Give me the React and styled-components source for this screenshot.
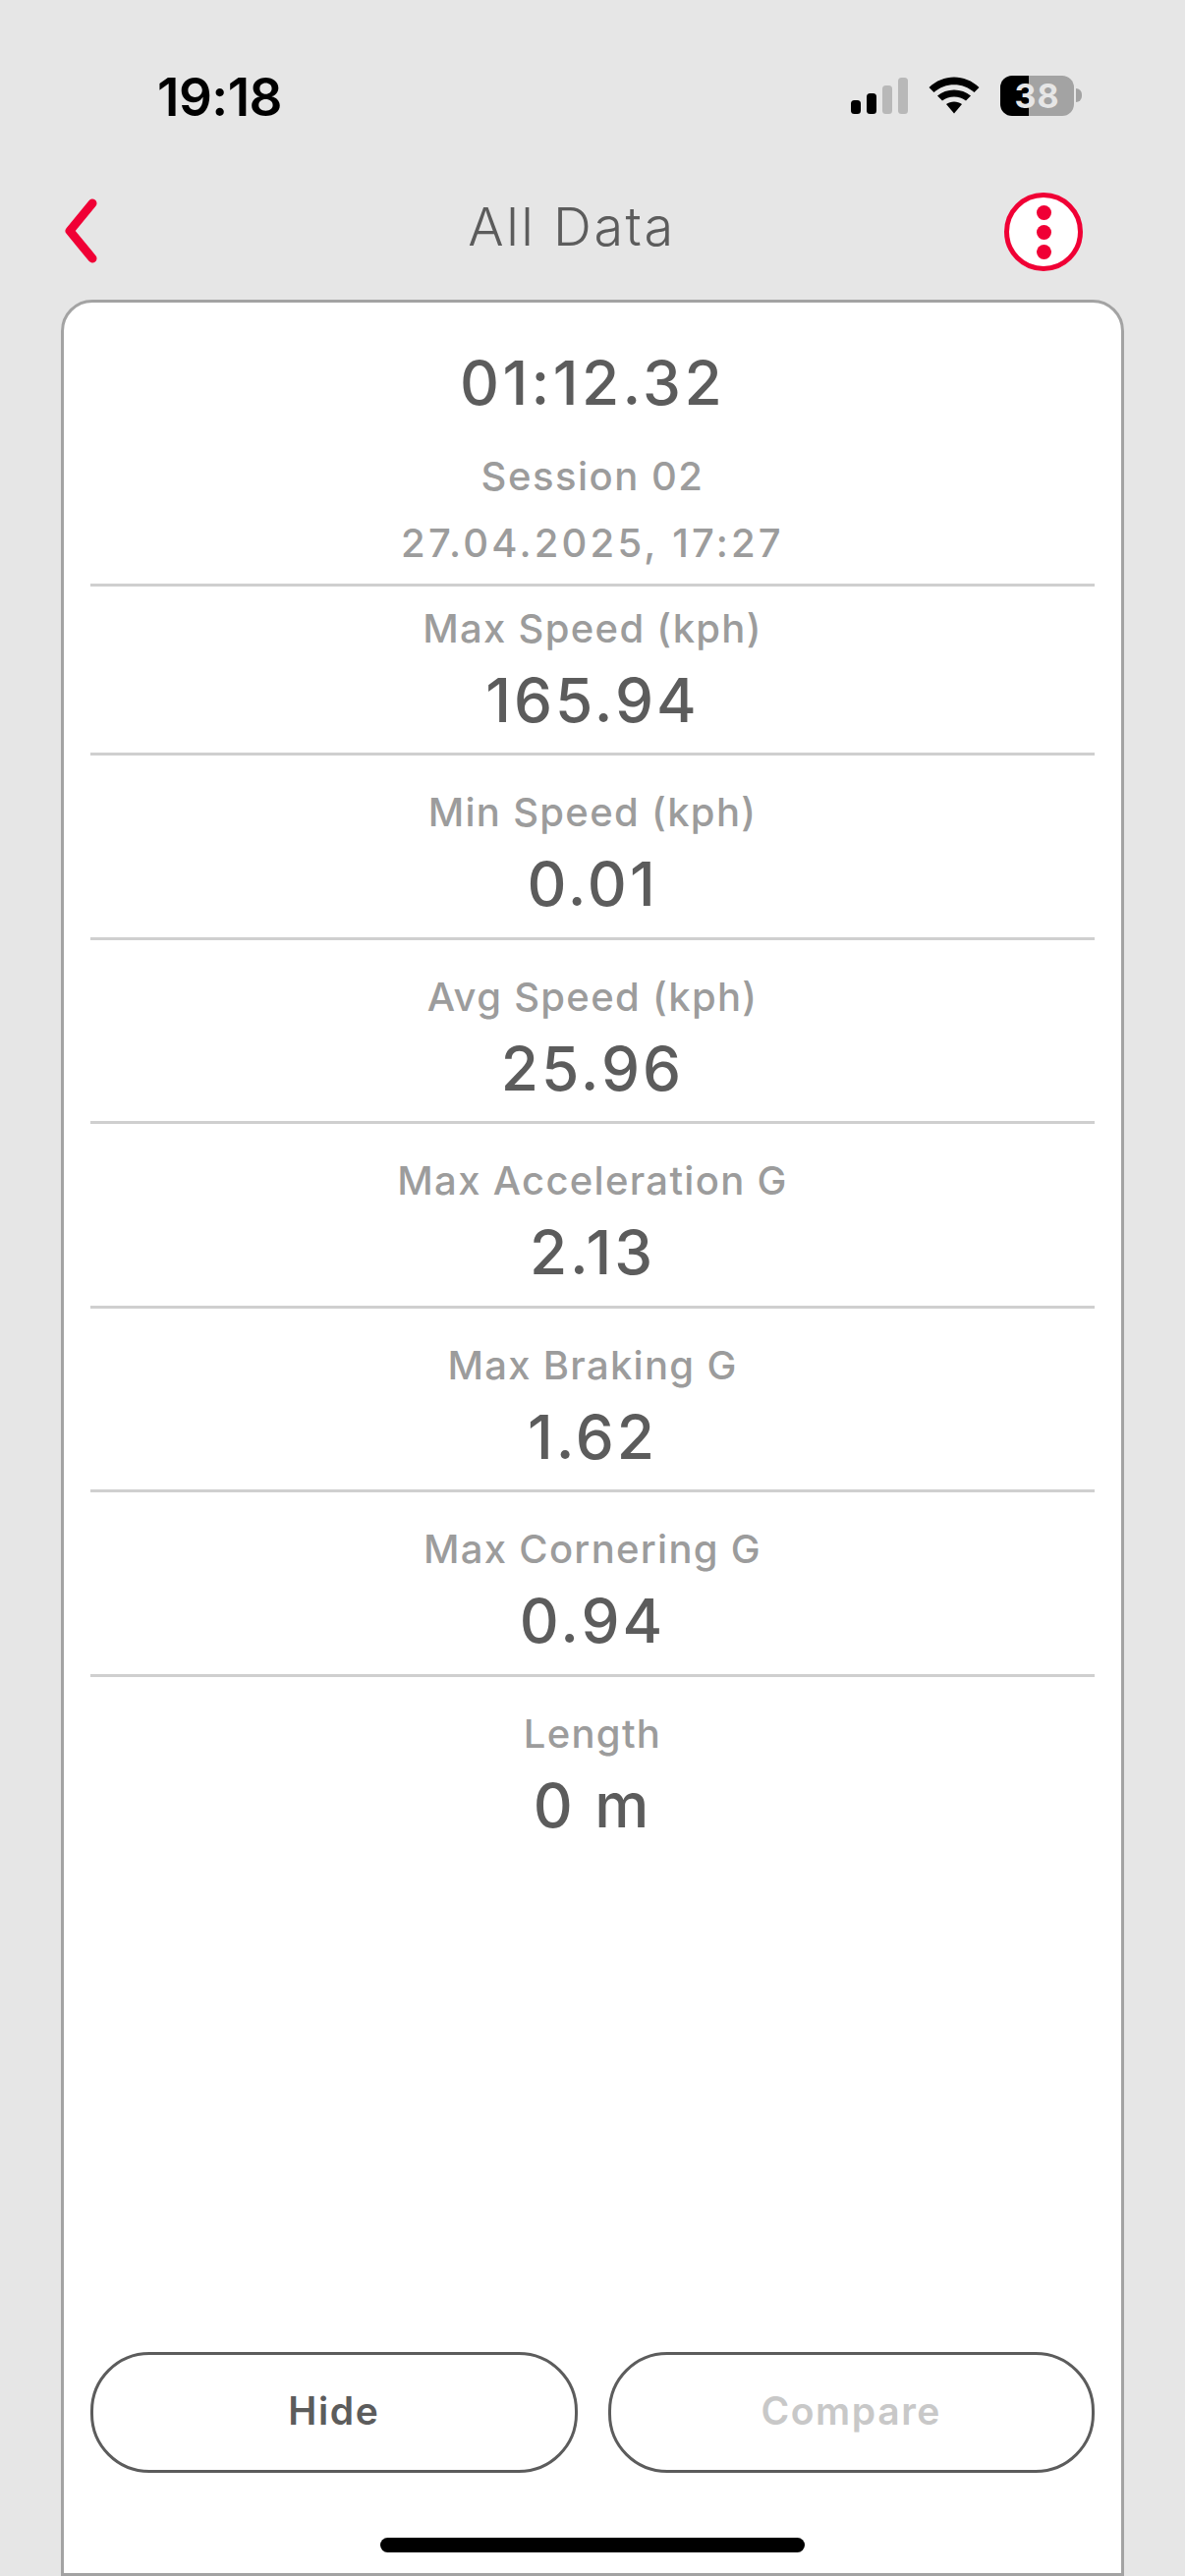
import React from "react";
import styled, { createGlobalStyle } from "styled-components";

const Global = createGlobalStyle`
  html, body { margin: 0; padding: 0; background: #e6e6e6; }
  * { box-sizing: border-box; }
`;

const Page = styled.div`
  position: relative;
  width: 1206px;
  height: 2622px;
  overflow: hidden;
  background: #e6e6e6;
  display: flex;
  flex-direction: column;
  font-family: Inter, "Noto Sans", sans-serif;
`;

const StatusBar = styled.div`
  height: 170px;
  padding: 74px 113px 0 160px;
  display: flex;
  justify-content: space-between;
  align-items: flex-start;
`;

const Clock = styled.div`
  font-weight: 600;
  font-size: 53px;
  line-height: 50px;
  letter-spacing: -0.5px;
  color: #000;
`;

const StatusIcons = styled.div`
  display: flex;
  align-items: center;
  gap: 21px;
  height: 46px;
`;

const Battery = styled.div`
  position: relative;
  width: 75px;
  height: 41px;
  border-radius: 12px;
  background: linear-gradient(90deg, #000 0 39%, #a3a3a3 39% 100%);
  color: #e6e6e6;
  font-weight: 700;
  font-size: 34px;
  line-height: 41px;
  text-align: center;
  letter-spacing: 1px;
  &::after {
    content: "";
    position: absolute;
    right: -8px;
    top: 13px;
    width: 6px;
    height: 14px;
    border-radius: 0 7px 7px 0;
    background: #a3a3a3;
  }
`;

const NavBar = styled.div`
  height: 135px;
  padding: 26px 104px 0 62px;
  display: grid;
  grid-template-columns: 120px 1fr 120px;
  align-items: start;
`;

const BackButton = styled.div`
  padding-top: 6px;
  line-height: 0;
`;

const Title = styled.div`
  text-align: center;
  font-weight: 300;
  font-size: 54px;
  line-height: 70px;
  letter-spacing: 2.5px;
  color: #5c5c5c;
`;

const MenuButton = styled.div`
  justify-self: end;
  width: 80px;
  height: 80px;
  border-radius: 50%;
  border: 5px solid #f00035;
  background: #fff;
  display: flex;
  flex-direction: column;
  align-items: center;
  justify-content: center;
  gap: 5px;
`;

const Dot = styled.span`
  width: 15px;
  height: 15px;
  border-radius: 50%;
  background: #f00035;
`;

const Card = styled.div`
  flex: 1;
  margin: 0 62px;
  border: 3px solid #a3a3a3;
  border-radius: 32px 32px 0 0;
  background: #fff;
  padding: 0 27px;
  display: flex;
  flex-direction: column;
`;

const Summary = styled.div`
  height: 289px;
  padding-top: 44px;
  border-bottom: 3px solid #cfcfcf;
  text-align: center;
  flex: none;
`;

const LapTime = styled.div`
  font-weight: 500;
  font-size: 62px;
  line-height: 76px;
  letter-spacing: 3.4px;
  margin-bottom: 23px;
  color: #5c5c5c;
`;

const Meta = styled.div`
  font-weight: 500;
  font-size: 40px;
  line-height: 68px;
  letter-spacing: ${(p) => p.$spacing}px;
  color: #9c9c9c;
`;

const Row = styled.div`
  flex: none;
  height: ${(p) => p.$h}px;
  padding-top: ${(p) => p.$top}px;
  border-bottom: ${(p) => (p.$last ? "none" : "3px solid #cfcfcf")};
  text-align: center;
`;

const Label = styled.div`
  font-weight: 500;
  font-size: 40px;
  line-height: 50px;
  letter-spacing: 1.3px;
  color: #9c9c9c;
`;

const Value = styled.div`
  font-weight: 500;
  font-size: 62px;
  line-height: 76px;
  letter-spacing: 3px;
  margin-top: 10px;
  color: #5c5c5c;
`;

const Actions = styled.div`
  margin-top: auto;
  margin-bottom: 102px;
  display: grid;
  grid-template-columns: 1fr 1fr;
  gap: 31px;
`;

const Pill = styled.div`
  height: 123px;
  padding-bottom: 4px;
  border: 3px solid #5c5c5c;
  border-radius: 60px;
  display: flex;
  align-items: center;
  justify-content: center;
  font-weight: 600;
  font-size: 39px;
  letter-spacing: 1.6px;
  color: ${(p) => (p.$disabled ? "#c8c8c8" : "#5c5c5c")};
`;

const HomeIndicator = styled.div`
  position: absolute;
  left: 387px;
  top: 2583px;
  width: 432px;
  height: 15px;
  border-radius: 8px;
  background: #000;
`;

const rows = [
  { label: "Max Speed (kph)", value: "165.94", h: 172, top: 18 },
  { label: "Min Speed (kph)", value: "0.01", h: 187.6, top: 33 },
  { label: "Avg Speed (kph)", value: "25.96", h: 187.6, top: 33 },
  { label: "Max Acceleration G", value: "2.13", h: 187.6, top: 33 },
  { label: "Max Braking G", value: "1.62", h: 187.6, top: 33 },
  { label: "Max Cornering G", value: "0.94", h: 187.6, top: 33 },
  { label: "Length", value: "0 m", h: 187.6, top: 33, last: true },
];

export default function App() {
  return (
    <Page>
      <Global />
      <StatusBar>
        <Clock>19:18</Clock>
        <StatusIcons>
          <svg width="58" height="37" viewBox="0 0 58 37">
            <rect x="0" y="23" width="10" height="14" rx="3.5" fill="#000" />
            <rect x="16" y="16" width="10" height="21" rx="3.5" fill="#000" />
            <rect x="32" y="8" width="10" height="29" rx="3.5" fill="#b8b8b8" />
            <rect x="48" y="0" width="10" height="37" rx="3.5" fill="#b8b8b8" />
          </svg>
          <svg width="52" height="38" viewBox="0 0 52 38">
            <path d="M0.5 11 C15 -3 37 -3 51.5 11 L46.5 16 C35 5.5 17 5.5 5.500 16 Z" fill="#000" />
            <path d="M9 19.500 C18 11.500 34 11.500 43 19.500 L38 24.500 C31 19 21 19 14 24.500 Z" fill="#000" />
            <path d="M18 28 C22.500 24.500 29.500 24.500 34 28 L26 37.500 Z" fill="#000" />
          </svg>
          <Battery>38</Battery>
        </StatusIcons>
      </StatusBar>
      <NavBar>
        <BackButton>
          <svg width="40" height="66" viewBox="0 0 40 66">
            <path d="M32 5 L9 33 L32 61" fill="none" stroke="#f00035" strokeWidth="9" strokeLinecap="round" strokeLinejoin="round" />
          </svg>
        </BackButton>
        <Title>All Data</Title>
        <MenuButton>
          <Dot />
          <Dot />
          <Dot />
        </MenuButton>
      </NavBar>
      <Card>
        <Summary>
          <LapTime>01:12.32</LapTime>
          <Meta $spacing={1.5}>Session 02</Meta>
          <Meta $spacing={3.2}>27.04.2025, 17:27</Meta>
        </Summary>
        {rows.map((r) => (
          <Row key={r.label} $h={r.h} $top={r.top} $last={r.last}>
            <Label>{r.label}</Label>
            <Value>{r.value}</Value>
          </Row>
        ))}
        <Actions>
          <Pill>Hide</Pill>
          <Pill $disabled>Compare</Pill>
        </Actions>
      </Card>
      <HomeIndicator />
    </Page>
  );
}
